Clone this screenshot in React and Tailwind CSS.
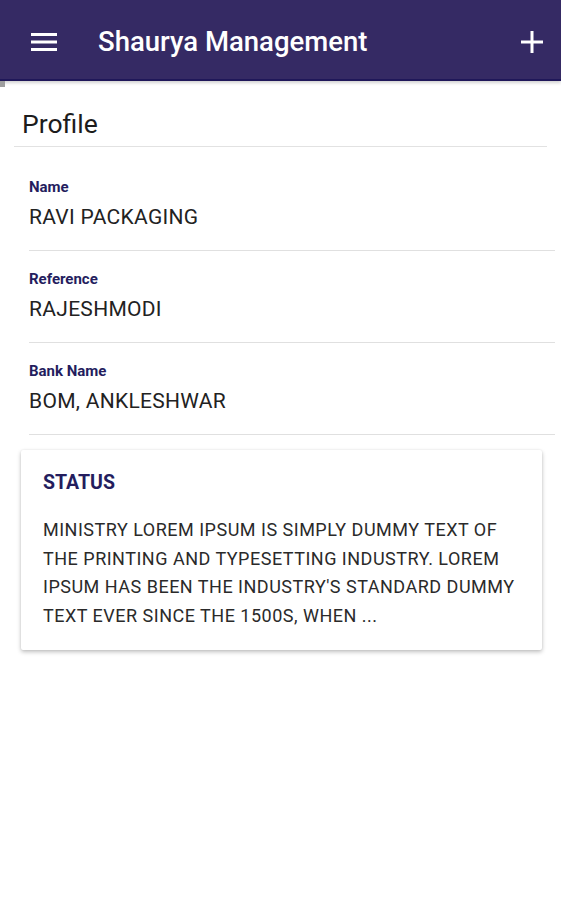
import React from "react";

const fields = [
  { label: "Name", value: "RAVI PACKAGING" },
  { label: "Reference", value: "RAJESHMODI" },
  { label: "Bank Name", value: "BOM, ANKLESHWAR" },
];

export default function App() {
  return (
    <div className="w-[561px] h-[900px] bg-white overflow-hidden" style={{ fontFamily: "Roboto, 'Noto Sans', sans-serif" }}>
      <header className="relative h-[81px] bg-[#352a64] border-b-2 border-[#1f1759] flex items-center pt-[5px] shadow-[0_2px_3px_rgba(0,0,0,0.18)]">
        <div className="pl-[31px] pr-[41px] flex items-center">
          <svg width="26" height="18" viewBox="0 0 26 18">
            <rect x="0" y="0" width="26" height="3" fill="white" />
            <rect x="0" y="7.5" width="26" height="3" fill="white" />
            <rect x="0" y="15" width="26" height="3" fill="white" />
          </svg>
        </div>
        <h1 className="text-white text-[27.5px] font-medium leading-none">Shaurya Management</h1>
        <div className="ml-auto pr-[18px] flex items-center">
          <svg width="22" height="22" viewBox="0 0 22 22">
            <rect x="9.5" y="0" width="3" height="22" fill="white" />
            <rect x="0" y="9.5" width="22" height="3" fill="white" />
          </svg>
        </div>
        <div className="absolute left-0 top-[81px] w-[5px] h-[6px] bg-[#9e9e9e]" />
      </header>

      <div className="pt-[28px] px-[14px]">
        <h2 className="pl-[8px] text-[26.5px] leading-[30px] text-[#1c1c1c] pb-[7px] border-b border-[#e2e2e2]">Profile</h2>
      </div>

      <div className="pl-[29px] pr-[6px] pt-[12px]">
        {fields.map((f) => (
          <div key={f.label} className="pt-[19px] pb-[21px] border-b border-[#e0e0e0]">
            <div className="text-[15px] leading-[18px] font-bold text-[#241d5e]">{f.label}</div>
            <div className="mt-[9px] text-[21px] leading-[24px] text-[#222] tracking-[0.3px]">{f.value}</div>
          </div>
        ))}
      </div>

      <div className="mt-[15px] mx-[21px] w-[521px] bg-white rounded-[2px] shadow-[0_2px_4px_rgba(0,0,0,0.25),0_0_2px_rgba(0,0,0,0.08)] px-[22px] pt-[21px] pb-[19px]">
        <div className="text-[19.5px] leading-[24px] font-bold text-[#241d5e]">STATUS</div>
        <p className="mt-[21px] text-[18px] leading-[28.7px] text-[#2a2a2a] tracking-[0.5px]">
          MINISTRY LOREM IPSUM IS SIMPLY DUMMY TEXT OF<br />
          THE PRINTING AND TYPESETTING INDUSTRY. LOREM<br />
          IPSUM HAS BEEN THE INDUSTRY'S STANDARD DUMMY<br />
          TEXT EVER SINCE THE 1500S, WHEN ...
        </p>
      </div>
    </div>
  );
}
